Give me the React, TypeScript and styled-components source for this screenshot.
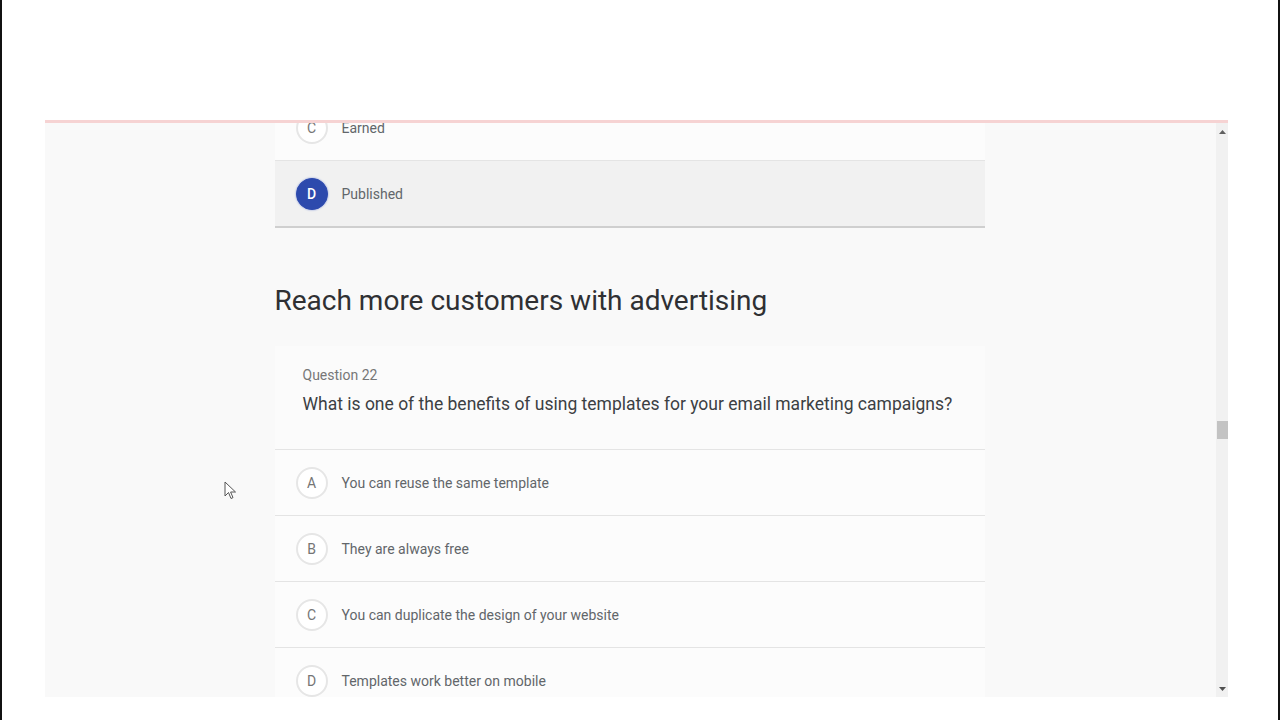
import React from "react";
import styled, { createGlobalStyle } from "styled-components";

const GlobalStyle = createGlobalStyle`
  html, body {
    margin: 0;
    padding: 0;
    background: #ffffff;
    font-family: Roboto, "Noto Sans", Arial, sans-serif;
  }
`;

const Screen = styled.div`
  width: 1280px;
  height: 720px;
  box-sizing: border-box;
  border-left: 2px solid #111;
  border-right: 2px solid #111;
  background: #ffffff;
  position: relative;
  overflow: hidden;
  padding-top: 120px;
`;

const Viewport = styled.div`
  margin-left: 43px;
  width: 1183px;
  height: 577px;
  box-sizing: border-box;
  border-top: 3px solid #f6d3d3;
  background: #f9f9f9;
  display: flex;
  overflow: hidden;
`;

const Content = styled.div`
  flex: 1;
  display: flex;
  justify-content: center;
  padding-right: 2px;
  overflow: hidden;
`;

const Column = styled.div`
  width: 710px;
  margin-top: -28px;
`;

const OptionRow = styled.div<{ $selected?: boolean }>`
  height: 65px;
  display: flex;
  align-items: center;
  padding-left: 21px;
  background: ${({ $selected }) => ($selected ? "#f1f1f1" : "#fcfcfc")};
  border-bottom: ${({ $selected }) =>
    $selected ? "2px solid #cfcfcf" : "1px solid #e4e4e4"};
`;

const Badge = styled.span<{ $selected?: boolean }>`
  width: 32px;
  height: 32px;
  box-sizing: border-box;
  border-radius: 50%;
  display: inline-flex;
  align-items: center;
  justify-content: center;
  font-size: 14px;
  font-weight: ${({ $selected }) => ($selected ? 500 : 400)};
  color: ${({ $selected }) => ($selected ? "#ffffff" : "#757575")};
  background: ${({ $selected }) => ($selected ? "#2d4aad" : "#ffffff")};
  border: ${({ $selected }) =>
    $selected ? "1px solid #2d4aad" : "2px solid #e6e6e6"};
  box-shadow: ${({ $selected }) => ($selected ? "0 0 2px #7b8fd6" : "none")};
`;

const OptionText = styled.span`
  margin-left: 14px;
  font-size: 14px;
  color: #62666a;
`;

const SectionTitle = styled.h2`
  margin: 57px 0 0;
  font-size: 28px;
  line-height: 32px;
  font-weight: 400;
  color: #2f3033;
`;

const QuestionCard = styled.div`
  margin-top: 29px;
  padding: 19px 28px 33px;
  background: #fbfbfb;
  border-bottom: 1px solid #e4e4e4;
`;

const QuestionLabel = styled.div`
  font-size: 14px;
  line-height: 20px;
  color: #777;
`;

const QuestionText = styled.div`
  margin-top: 7px;
  font-size: 17.5px;
  line-height: 24px;
  color: #3c4043;
`;

const Scrollbar = styled.div`
  width: 12px;
  background: #f1f1f1;
  display: flex;
  flex-direction: column;
  align-items: center;
`;

const ArrowCell = styled.div`
  height: 17px;
  display: flex;
  align-items: center;
  justify-content: center;
`;

const Track = styled.div`
  flex: 1;
  width: 100%;
  display: flex;
  flex-direction: column;
`;

const Thumb = styled.div`
  width: 11px;
  margin-left: 1px;
  height: 18px;
  background: #c3c3c3;
`;

const Cursor = styled.svg`
  position: absolute;
  left: 222px;
  top: 481px;
`;

type Option = { letter: string; text: string; selected?: boolean };

const previous: Option[] = [
  { letter: "C", text: "Earned" },
  { letter: "D", text: "Published", selected: true },
];

const answers: Option[] = [
  { letter: "A", text: "You can reuse the same template" },
  { letter: "B", text: "They are always free" },
  { letter: "C", text: "You can duplicate the design of your website" },
  { letter: "D", text: "Templates work better on mobile" },
];

function OptionItem({ letter, text, selected }: Option) {
  return (
    <OptionRow $selected={selected}>
      <Badge $selected={selected}>{letter}</Badge>
      <OptionText>{text}</OptionText>
    </OptionRow>
  );
}

export default function App() {
  const thumbOffset = 281;
  return (
    <>
      <GlobalStyle />
      <Screen>
        <Viewport>
          <Content>
            <Column>
              {previous.map((o) => (
                <OptionItem key={"p" + o.letter} {...o} />
              ))}
              <SectionTitle>Reach more customers with advertising</SectionTitle>
              <QuestionCard>
                <QuestionLabel>Question 22</QuestionLabel>
                <QuestionText>
                  What is one of the benefits of using templates for your email
                  marketing campaigns?
                </QuestionText>
              </QuestionCard>
              {answers.map((o) => (
                <OptionItem key={o.letter} {...o} />
              ))}
            </Column>
          </Content>
          <Scrollbar>
            <ArrowCell>
              <svg width="7" height="4" viewBox="0 0 7 4">
                <path d="M0 4 L3.5 0 L7 4 Z" fill="#606060" />
              </svg>
            </ArrowCell>
            <Track>
              <Thumb style={{ marginTop: thumbOffset }} />
            </Track>
            <ArrowCell>
              <svg width="7" height="4" viewBox="0 0 7 4">
                <path d="M0 0 L3.5 4 L7 0 Z" fill="#505050" />
              </svg>
            </ArrowCell>
          </Scrollbar>
        </Viewport>
        <Cursor width="13" height="19" viewBox="0 0 13 19">
          <path
            d="M1 1 L1 15 L4.5 11.5 L7 17.5 L9 16.6 L6.6 11 L11.5 11 Z"
            fill="#ffffff"
            stroke="#555"
            strokeWidth="1"
            strokeLinejoin="round"
          />
        </Cursor>
      </Screen>
    </>
  );
}
